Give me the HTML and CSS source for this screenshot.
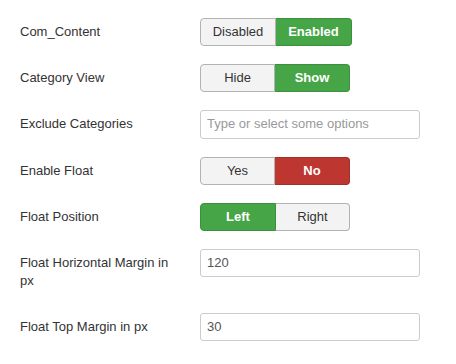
FILE: index.html
```html
<!DOCTYPE html>
<html>
<head>
<meta charset="utf-8">
<link rel="stylesheet" href="styles.css">
</head>
<body>
<form class="form">
  <div class="row">
    <label class="label">Com_Content</label>
    <div class="controls">
      <div class="toggle">
        <span class="btn">Disabled</span><span class="btn on-green">Enabled</span>
      </div>
    </div>
  </div>
  <div class="row">
    <label class="label">Category View</label>
    <div class="controls">
      <div class="toggle">
        <span class="btn w75">Hide</span><span class="btn on-green w75">Show</span>
      </div>
    </div>
  </div>
  <div class="row">
    <label class="label">Exclude Categories</label>
    <div class="controls">
      <div class="chosen">Type or select some options</div>
    </div>
  </div>
  <div class="row">
    <label class="label">Enable Float</label>
    <div class="controls">
      <div class="toggle">
        <span class="btn w75">Yes</span><span class="btn on-red w75">No</span>
      </div>
    </div>
  </div>
  <div class="row">
    <label class="label">Float Position</label>
    <div class="controls">
      <div class="toggle">
        <span class="btn on-green">Left</span><span class="btn w74">Right</span>
      </div>
    </div>
  </div>
  <div class="row">
    <label class="label">Float Horizontal Margin in px</label>
    <div class="controls">
      <div class="input">120</div>
    </div>
  </div>
  <div class="row">
    <label class="label">Float Top Margin in px</label>
    <div class="controls">
      <div class="input">30</div>
    </div>
  </div>
</form>
</body>
</html>
```
FILE: styles.css
```css
html, body {
  margin: 0;
  padding: 0;
  background: #fff;
}
body {
  font-family: "Liberation Sans", Arial, sans-serif;
  font-size: 13px;
  line-height: 18px;
  color: #333;
}
.form {
  padding: 18px 0 0 20px;
}
.row {
  display: flex;
  align-items: flex-start;
  margin-bottom: 18px;
}
.label {
  width: 160px;
  padding: 5px 0;
  margin-right: 20px;
  line-height: 18px;
}
.controls {
  display: flex;
}
.toggle {
  display: flex;
  height: 28px;
}
.btn {
  box-sizing: border-box;
  width: 76px;
  height: 28px;
  line-height: 26px;
  text-align: center;
  background: #f3f3f3;
  border: 1px solid #b3b3b3;
  color: #333;
  font-size: 13px;
}
.btn:first-child {
  border-radius: 4px 0 0 4px;
}
.btn:last-child {
  border-radius: 0 4px 4px 0;
}
.btn + .btn {
  border-left: none;
}
.w75 { width: 75px; }
.w74 { width: 74px; }
.on-green {
  background: #46a546;
  border-color: #3c8f3c;
  color: #fff;
  font-weight: bold;
}
.on-red {
  background: #bd362f;
  border-color: #a0302a;
  color: #fff;
  font-weight: bold;
}
.chosen, .input {
  box-sizing: border-box;
  width: 220px;
  height: 28px;
  border: 1px solid #ccc;
  border-radius: 3px;
  padding: 4px 6px;
  line-height: 18px;
  background: #fff;
}
.chosen {
  height: 29px;
  color: #999;
}
.input {
  color: #555;
}
```
